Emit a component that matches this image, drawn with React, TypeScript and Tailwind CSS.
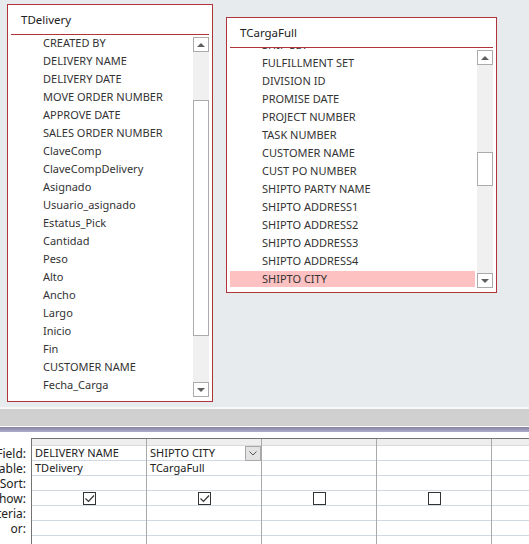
const deliveryFields = [
  "CREATED BY",
  "DELIVERY NAME",
  "DELIVERY DATE",
  "MOVE ORDER NUMBER",
  "APPROVE DATE",
  "SALES ORDER NUMBER",
  "ClaveComp",
  "ClaveCompDelivery",
  "Asignado",
  "Usuario_asignado",
  "Estatus_Pick",
  "Cantidad",
  "Peso",
  "Alto",
  "Ancho",
  "Largo",
  "Inicio",
  "Fin",
  "CUSTOMER NAME",
  "Fecha_Carga",
];

const cargaFields = [
  "SHIP SET",
  "FULFILLMENT SET",
  "DIVISION ID",
  "PROMISE DATE",
  "PROJECT NUMBER",
  "TASK NUMBER",
  "CUSTOMER NAME",
  "CUST PO NUMBER",
  "SHIPTO PARTY NAME",
  "SHIPTO ADDRESS1",
  "SHIPTO ADDRESS2",
  "SHIPTO ADDRESS3",
  "SHIPTO ADDRESS4",
  "SHIPTO CITY",
];

const ScrollArrow = ({ dir }: { dir: "up" | "down" }) => (
  <div className="w-[16px] h-[15px] shrink-0 border border-[#ababab] bg-white flex items-center justify-center">
    <svg width="8" height="4" viewBox="0 0 8 4">
      <polygon points={dir === "up" ? "0,4 8,4 4,0" : "0,0 8,0 4,4"} fill="#5f5f5f" />
    </svg>
  </div>
);

// spacer / thumb heights differ per table, passed as full class names
const Scrollbar = ({ spacer, thumb }: { spacer: string; thumb: string }) => (
  <div className="w-[16px] ml-[2px] mr-[3px] mt-[2px] mb-[4px] flex flex-col bg-[#f0f0f0]">
    <ScrollArrow dir="up" />
    <div className={spacer} />
    <div className={`${thumb} border border-[#ababab] bg-white`} />
    <div className="flex-1" />
    <ScrollArrow dir="down" />
  </div>
);

type TableBoxProps = {
  title: string;
  fields: string[];
  selected?: string;
  listOffset: string;
  spacer: string;
  thumb: string;
  className: string;
};

const TableBox = ({ title, fields, selected, listOffset, spacer, thumb, className }: TableBoxProps) => (
  <div className={`absolute bg-white border border-[#b0353b] flex flex-col ${className}`}>
    <div className="h-[29px] shrink-0 flex items-center pl-[13px] text-[11.5px] text-[#222]">{title}</div>
    <div className="h-px mx-[3px] bg-[#b0353b] shrink-0" />
    <div className="flex-1 flex min-h-0">
      <div className="flex-1 ml-[3px] overflow-hidden">
        <div className={listOffset}>
          {fields.map((f) => (
            <div key={f} className="h-[18px] flex">
              <div
                className={`flex-1 my-[1px] pl-[32px] flex items-center text-[11px] leading-[16px] text-[#333] whitespace-nowrap ${
                  f === selected ? "bg-[#fdc1c1]" : ""
                }`}
              >
                {f}
              </div>
            </div>
          ))}
        </div>
      </div>
      <Scrollbar spacer={spacer} thumb={thumb} />
    </div>
  </div>
);

const CheckBox = ({ checked }: { checked: boolean }) => (
  <div className="w-[13px] h-[13px] border border-[#333] bg-white flex items-center justify-center">
    {checked && (
      <svg width="11" height="11" viewBox="0 0 11 11">
        <polyline points="1.5,5.5 4.5,8.5 10,2.5" fill="none" stroke="#333" strokeWidth="1.2" />
      </svg>
    )}
  </div>
);

const labels = ["Field:", "Table:", "Sort:", "Show:", "Criteria:", "or:", ""];

type Col = { field: string; table: string; show: boolean | null; dropdown?: boolean };

const columns: Col[] = [
  { field: "DELIVERY NAME", table: "TDelivery", show: true },
  { field: "SHIPTO CITY", table: "TCargaFull", show: true, dropdown: true },
  { field: "", table: "", show: false },
  { field: "", table: "", show: false },
  { field: "", table: "", show: null },
];

const App = () => {
  return (
    <div className="w-[529px] h-[544px] overflow-hidden bg-white" style={{ fontFamily: '"Noto Sans", "Open Sans", sans-serif' }}>
      {/* table design canvas */}
      <div className="relative h-[407px] bg-[#e8ebee]">
        <TableBox
          title="TDelivery"
          fields={deliveryFields}
          listOffset="-mt-[1px]"
          spacer="h-[48px]"
          thumb="h-[236px]"
          className="left-[7px] top-[4px] w-[206px] h-[398px]"
        />
        <TableBox
          title="TCargaFull"
          fields={cargaFields}
          selected="SHIPTO CITY"
          listOffset="-mt-[12px]"
          spacer="h-[87px]"
          thumb="h-[34px]"
          className="left-[226px] top-[17px] w-[271px] h-[276px]"
        />
      </div>

      {/* splitter */}
      <div className="h-[2px] bg-[#f7f7f7]" />
      <div className="h-[17px] bg-[#d0d0d0]" />
      <div className="h-px bg-white" />
      <div className="h-[5px] bg-linear-to-b from-[#8684a6] to-[#aeadc8]" />
      <div className="h-[6px] bg-white" />

      {/* query grid */}
      <div className="flex text-[11px] leading-[14px] text-[#222]">
        <div className="w-[31px] shrink-0 flex flex-col items-end pr-[5px] text-[12px] leading-[14px]">
          <div className="h-[8px]" />
          {labels.map((l, i) => (
            <div key={i} className="h-[15px] flex items-center whitespace-nowrap">
              {l}
            </div>
          ))}
        </div>
        <div className="flex border-l border-t border-[#737373]">
          {columns.map((c, i) => (
            <div key={i} className="w-[115px] shrink-0 flex flex-col border-r border-[#a9a9a9]">
              <div className="h-[7px] bg-[#eeeeee] border-b border-[#d9d9d9]" />
              <div className="h-[15px] flex items-center border-b border-[#d3d9e3]">
                <span className="pl-[3px] flex-1 whitespace-nowrap">{c.field}</span>
                {c.dropdown && (
                  <div className="w-[16px] h-[15px] -mb-px bg-[#e3e3e3] border border-[#a9a9a9] flex items-center justify-center">
                    <svg width="8" height="5" viewBox="0 0 8 5">
                      <polyline points="0.5,0.5 4,4 7.5,0.5" fill="none" stroke="#555" strokeWidth="1" />
                    </svg>
                  </div>
                )}
              </div>
              <div className="h-[15px] flex items-center pl-[3px] border-b border-[#d3d9e3] whitespace-nowrap">{c.table}</div>
              <div className="h-[15px] border-b border-[#d3d9e3]" />
              <div className="h-[15px] flex items-center justify-center border-b border-[#d3d9e3]">
                {c.show !== null && <CheckBox checked={c.show} />}
              </div>
              <div className="h-[15px] border-b border-[#d3d9e3]" />
              <div className="h-[15px] border-b border-[#d3d9e3]" />
              <div className="h-[15px]" />
            </div>
          ))}
        </div>
      </div>
    </div>
  );
};

export default App;
